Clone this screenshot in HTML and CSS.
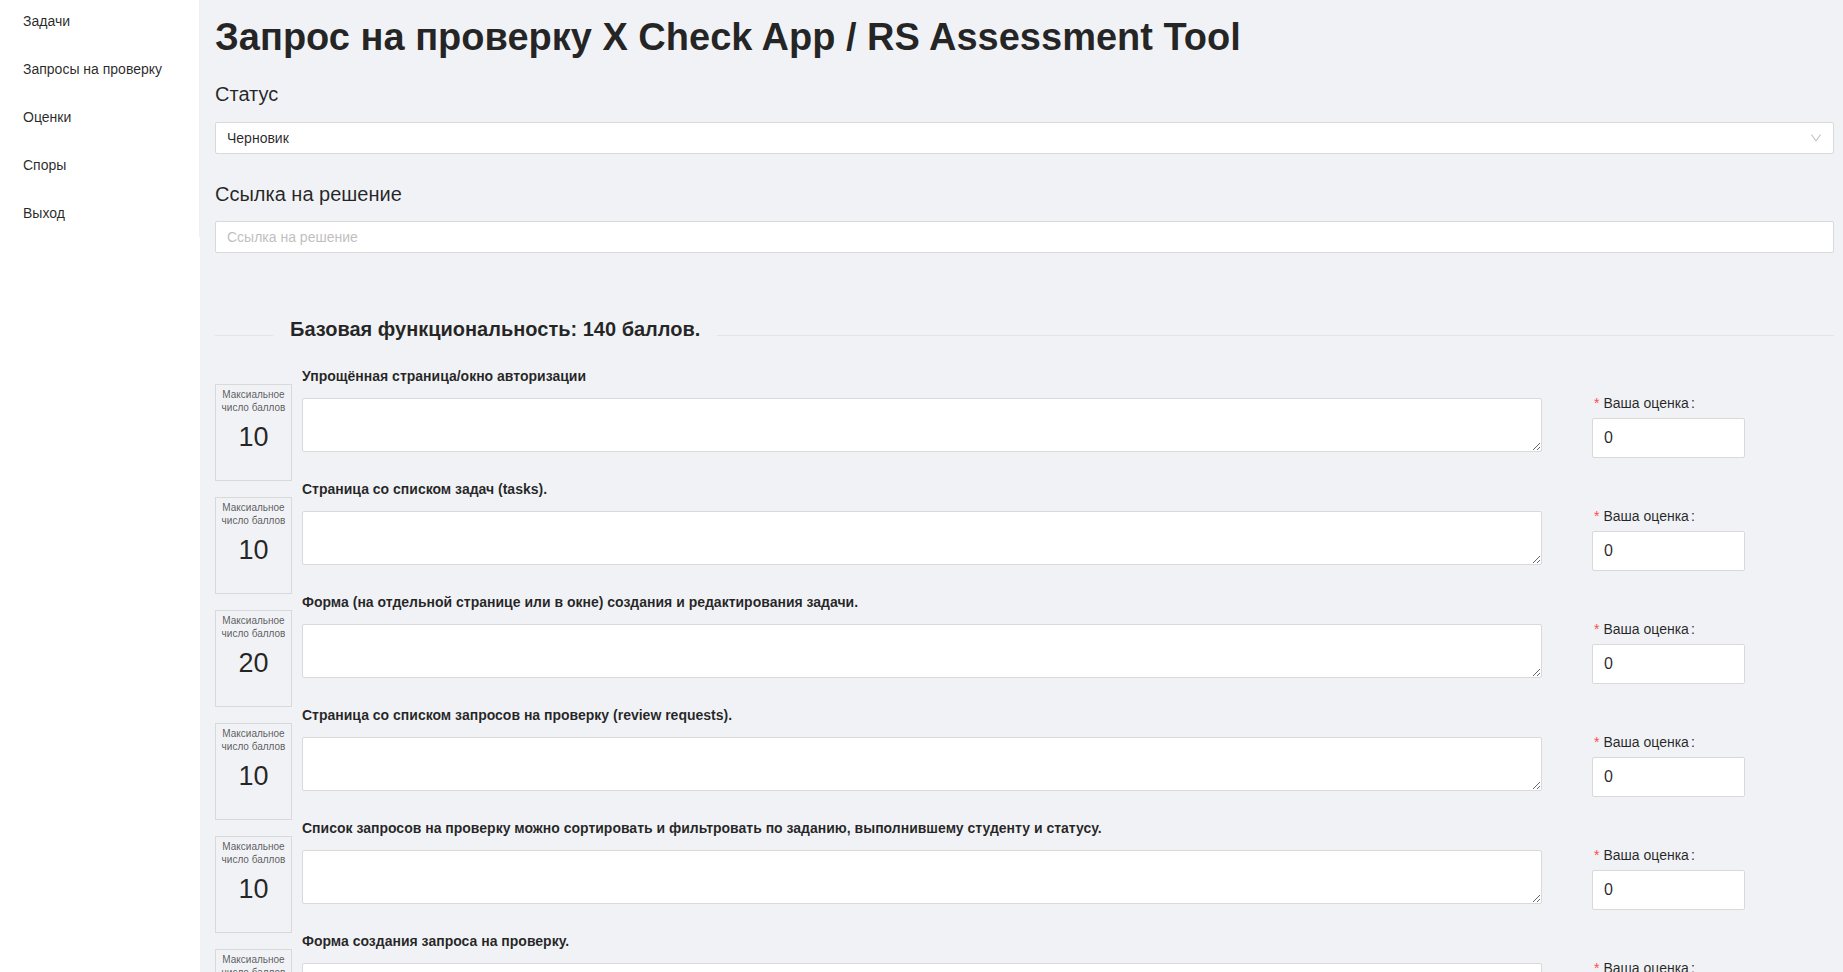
FILE: index.html
```html
<!DOCTYPE html>
<html lang="ru">
<head>
<meta charset="utf-8">
<title>Запрос на проверку X Check App / RS Assessment Tool</title>
<link rel="stylesheet" href="styles.css">
</head>
<body>
<div class="layout">
  <aside class="sider">
    <ul class="menu">
      <li class="menu-item">Задачи</li>
      <li class="menu-item">Запросы на проверку</li>
      <li class="menu-item">Оценки</li>
      <li class="menu-item">Споры</li>
      <li class="menu-item">Выход</li>
    </ul>
  </aside>
  <main class="content">
    <h1 class="title">Запрос на проверку X Check App / RS Assessment Tool</h1>

    <h4 class="field-title">Статус</h4>
    <div class="select">
      <span class="select-value">Черновик</span>
      <svg class="select-arrow" viewBox="64 64 896 896" width="12" height="12" aria-hidden="true"><path fill="currentColor" d="M884 256h-75c-5.1 0-9.9 2.5-12.9 6.6L512 654.2 227.9 262.6c-3-4.1-7.8-6.6-12.9-6.6h-75c-6.5 0-10.3 7.4-6.5 12.7l352.6 486.1c12.8 17.6 39 17.6 51.7 0l352.6-486.1c3.9-5.3.1-12.7-6.4-12.7z"/></svg>
    </div>

    <h4 class="field-title field-title--next">Ссылка на решение</h4>
    <input class="text-input" type="text" placeholder="Ссылка на решение">

    <div class="divider">
      <span class="divider-line divider-line--left"></span>
      <span class="divider-text">Базовая функциональность: 140 баллов.</span>
      <span class="divider-line divider-line--right"></span>
    </div>

    <div class="criteria">
      <div class="criterion">
        <div class="max-box"><div class="max-caption">Максиальное<br>число баллов</div><div class="max-value">10</div></div>
        <div class="criterion-body">
          <div class="criterion-title">Упрощённая страница/окно авторизации</div>
          <textarea class="comment"></textarea>
        </div>
        <div class="score">
          <label class="score-label"><span class="required">*</span>Ваша оценка<span class="colon">:</span></label>
          <input class="score-input" type="text" value="0">
        </div>
      </div>

      <div class="criterion">
        <div class="max-box"><div class="max-caption">Максиальное<br>число баллов</div><div class="max-value">10</div></div>
        <div class="criterion-body">
          <div class="criterion-title">Страница со списком задач (tasks).</div>
          <textarea class="comment"></textarea>
        </div>
        <div class="score">
          <label class="score-label"><span class="required">*</span>Ваша оценка<span class="colon">:</span></label>
          <input class="score-input" type="text" value="0">
        </div>
      </div>

      <div class="criterion">
        <div class="max-box"><div class="max-caption">Максиальное<br>число баллов</div><div class="max-value">20</div></div>
        <div class="criterion-body">
          <div class="criterion-title">Форма (на отдельной странице или в окне) создания и редактирования задачи.</div>
          <textarea class="comment"></textarea>
        </div>
        <div class="score">
          <label class="score-label"><span class="required">*</span>Ваша оценка<span class="colon">:</span></label>
          <input class="score-input" type="text" value="0">
        </div>
      </div>

      <div class="criterion">
        <div class="max-box"><div class="max-caption">Максиальное<br>число баллов</div><div class="max-value">10</div></div>
        <div class="criterion-body">
          <div class="criterion-title">Страница со списком запросов на проверку (review requests).</div>
          <textarea class="comment"></textarea>
        </div>
        <div class="score">
          <label class="score-label"><span class="required">*</span>Ваша оценка<span class="colon">:</span></label>
          <input class="score-input" type="text" value="0">
        </div>
      </div>

      <div class="criterion">
        <div class="max-box"><div class="max-caption">Максиальное<br>число баллов</div><div class="max-value">10</div></div>
        <div class="criterion-body">
          <div class="criterion-title">Список запросов на проверку можно сортировать и фильтровать по заданию, выполнившему студенту и статусу.</div>
          <textarea class="comment"></textarea>
        </div>
        <div class="score">
          <label class="score-label"><span class="required">*</span>Ваша оценка<span class="colon">:</span></label>
          <input class="score-input" type="text" value="0">
        </div>
      </div>

      <div class="criterion">
        <div class="max-box"><div class="max-caption">Максиальное<br>число баллов</div><div class="max-value">10</div></div>
        <div class="criterion-body">
          <div class="criterion-title">Форма создания запроса на проверку.</div>
          <textarea class="comment"></textarea>
        </div>
        <div class="score">
          <label class="score-label"><span class="required">*</span>Ваша оценка<span class="colon">:</span></label>
          <input class="score-input" type="text" value="0">
        </div>
      </div>
    </div>
  </main>
</div>
</body>
</html>
```

FILE: styles.css
```css
* {
  box-sizing: border-box;
}

html, body {
  margin: 0;
  padding: 0;
  height: 100%;
}

body {
  background: #f0f2f5;
  font-family: "Liberation Sans", Arial, sans-serif;
  font-size: 14px;
  color: rgba(0, 0, 0, 0.85);
}

.layout {
  display: flex;
  height: 100vh;
}

/* Sidebar */
.sider {
  flex: 0 0 200px;
  width: 200px;
  background: #fff;
}

.menu {
  list-style: none;
  margin: 0;
  padding: 1px 0 4px;
  border-right: 1px solid #f0f0f0;
}

.menu-item {
  height: 40px;
  line-height: 40px;
  padding-left: 23px;
  font-size: 14px;
  color: rgba(0, 0, 0, 0.85);
  margin-bottom: 8px;
  white-space: nowrap;
}

.menu-item:last-child {
  margin-bottom: 0;
}

/* Main content */
.content {
  flex: 1;
  padding: 14px 9px 40px 15px;
  overflow-y: auto;
  scrollbar-width: none;
}

.content::-webkit-scrollbar {
  display: none;
}

.title {
  margin: 0 0 20px;
  font-size: 38px;
  line-height: 46px;
  font-weight: 700;
  color: rgba(0, 0, 0, 0.85);
  white-space: nowrap;
}

.field-title {
  margin: 0 0 14px;
  font-size: 20px;
  line-height: 28px;
  font-weight: 400;
  color: rgba(0, 0, 0, 0.85);
}

.field-title--next {
  margin-top: 26px;
  margin-bottom: 13px;
}

.select {
  display: flex;
  align-items: center;
  justify-content: space-between;
  height: 32px;
  padding: 0 11px 0 11px;
  background: #fff;
  border: 1px solid #d9d9d9;
  border-radius: 2px;
}

.select-value {
  font-size: 14px;
  line-height: 30px;
  color: rgba(0, 0, 0, 0.85);
}

.select-arrow {
  display: block;
  color: rgba(0, 0, 0, 0.25);
}

.text-input {
  display: block;
  width: 100%;
  height: 32px;
  padding: 4px 11px;
  background: #fff;
  border: 1px solid #d9d9d9;
  border-radius: 2px;
  font-family: inherit;
  font-size: 14px;
  color: rgba(0, 0, 0, 0.85);
  outline: none;
}

.text-input::placeholder {
  color: #bfbfbf;
}

/* Divider */
.divider {
  display: flex;
  align-items: flex-start;
  margin: 62px 0 21px;
}

.divider-line {
  display: block;
  margin-top: 20px;
  border-top: 1px solid #e2e4e7;
}

.divider-line--left {
  flex: 0 0 58px;
}

.divider-line--right {
  flex: 1;
}

.divider-text {
  padding: 0 17px;
  font-size: 20px;
  line-height: 28px;
  font-weight: 700;
  white-space: nowrap;
  color: rgba(0, 0, 0, 0.85);
}

/* Criteria rows */
.criterion {
  display: flex;
  align-items: flex-start;
  height: 113px;
}

.max-box {
  flex: 0 0 77px;
  width: 77px;
  height: 97px;
  margin-top: 20px;
  padding-top: 3px;
  border: 1px solid #d9d9d9;
  text-align: center;
}

.max-caption {
  font-size: 10px;
  line-height: 13px;
  color: rgba(0, 0, 0, 0.65);
}

.max-value {
  margin-top: 3px;
  font-size: 27px;
  line-height: 40px;
  color: rgba(0, 0, 0, 0.85);
}

.criterion-body {
  flex: 0 0 1240px;
  width: 1240px;
  margin-left: 10px;
}

.criterion-title {
  padding-top: 1px;
  font-size: 14px;
  line-height: 22px;
  font-weight: 700;
  color: rgba(0, 0, 0, 0.85);
  white-space: nowrap;
}

.comment {
  display: block;
  width: 100%;
  height: 54px;
  margin-top: 11px;
  padding: 4px 11px;
  background: #fff;
  border: 1px solid #d9d9d9;
  border-radius: 2px;
  font-family: inherit;
  font-size: 14px;
  outline: none;
}

.score {
  flex: 0 0 153px;
  width: 153px;
  margin-left: 50px;
  margin-top: 28px;
}

.score-label {
  display: block;
  padding-left: 1px;
  font-size: 14px;
  line-height: 22px;
  color: rgba(0, 0, 0, 0.85);
  white-space: nowrap;
}

.required {
  display: inline-block;
  margin-right: 4px;
  margin-left: 1px;
  color: #ff4d4f;
  font-size: 14px;
  line-height: 1;
}

.colon {
  margin: 0 8px 0 2px;
  position: relative;
  top: -0.5px;
}

.score-input {
  display: block;
  width: 100%;
  height: 40px;
  margin-top: 4px;
  padding: 6px 11px;
  background: #fff;
  border: 1px solid #d9d9d9;
  border-radius: 2px;
  font-family: inherit;
  font-size: 16px;
  color: rgba(0, 0, 0, 0.85);
  outline: none;
}
```
